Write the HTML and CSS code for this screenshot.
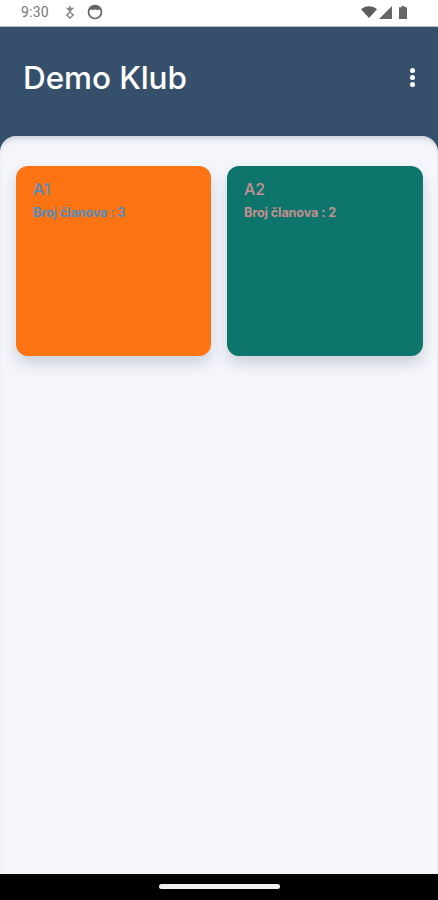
FILE: index.html
```html
<!DOCTYPE html>
<html lang="hr">
<head>
<meta charset="utf-8">
<title>Demo Klub</title>
<link rel="stylesheet" href="styles.css">
</head>
<body>
<div class="screen">
  <div class="status">
    <div class="status-left">
      <span class="time">9:30</span>
      <svg class="ic-a" viewBox="0 0 12 14"><path d="M6 1v4M3.500 3.500h5L6 6zM6 7l3.200 3L6 13 2.800 10z" fill="none" stroke="#888" stroke-width="1.500"/></svg>
      <svg class="ic-b" viewBox="0 0 16 16"><circle cx="8" cy="8" r="6.500" fill="#fff" stroke="#666" stroke-width="1.700"/><path d="M2 7C2 3 5 1.500 8 1.500S14 3 14 7C12 5 11 5 10.500 6.500 9 5 7 5 5.500 6.500 5 5 4 5 2 7z" fill="#666"/></svg>
    </div>
    <div class="status-right">
      <svg class="ic-wifi" viewBox="0 0 16 12"><path d="M0 3.200C4.500-.9 11.500-.9 16 3.200L8 12z" fill="#5c5c5c"/></svg>
      <svg class="ic-signal" viewBox="0 0 13 13"><path d="M13 0v13H0z" fill="#666"/></svg>
      <svg class="ic-batt" viewBox="0 0 8 13"><path d="M2.500 0h3v1.200H8V13H0V1.200h2.500z" fill="#666"/></svg>
    </div>
  </div>
  <header class="appbar">
    <h1 class="title">Demo Klub</h1>
    <div class="menu"><i></i><i></i><i></i></div>
  </header>
  <main class="content">
    <div class="grid">
      <section class="card orange">
        <h2>A1</h2>
        <p>Broj članova : 3</p>
      </section>
      <section class="card teal">
        <h2>A2</h2>
        <p>Broj članova : 2</p>
      </section>
    </div>
  </main>
  <div class="navbar"><span class="pill"></span></div>
</div>
</body>
</html>
```
FILE: styles.css
```css
* { box-sizing: border-box; }
html, body { margin: 0; padding: 0; }
body { font-family: Inter, "Noto Sans", "Liberation Sans", sans-serif; background: #36506c; }
.screen { width: 438px; height: 900px; display: flex; flex-direction: column; overflow: hidden; }
.status { height: 27px; flex: none; background: #fff; display: flex; justify-content: space-between; align-items: center; padding: 1px 31px 3px 21px; border-bottom: 1px solid #b9bcc0; }
.status-left, .status-right { display: flex; align-items: center; }
.time { font-family: Roboto, sans-serif; font-size: 14px; color: #777; width: 43px; letter-spacing: .2px; }
.ic-a { width: 12px; height: 14px; margin-right: 11px; }
.ic-b { width: 16px; height: 16px; }
.ic-wifi { width: 16px; height: 12px; margin-right: 2px; }
.ic-signal { width: 13px; height: 13px; margin-right: 7px; }
.ic-batt { width: 8px; height: 13px; }
.appbar { height: 109px; flex: none; background: #36506c; display: flex; justify-content: space-between; align-items: flex-start; padding: 32px 23px 0 23px; }
.title { margin: 0; font-size: 31.500px; line-height: 38px; font-weight: 500; color: #fff; letter-spacing: -.1px; }
.menu { display: flex; flex-direction: column; gap: 2px; margin-top: 9px; }
.menu i { display: block; width: 5px; height: 5px; border-radius: 50%; background: #fff; }
.content { flex: 1; background: #f4f6fb; border-radius: 16px 16px 0 0; padding: 30px 15px 0 16px; box-shadow: inset 0 6px 6px -4px rgba(30,40,60,.22); }
.grid { display: grid; grid-template-columns: 195px 196px; gap: 16px; }
.card { height: 190px; border-radius: 12px; padding: 13px 17px; box-shadow: 0 8px 14px rgba(60,70,90,.2); }
.card h2 { margin: 0; font-size: 16px; line-height: 20px; font-weight: 500; }
.card p { margin: 6px 0 0; font-size: 12.600px; line-height: 16px; font-weight: 700; letter-spacing: -.1px; }
.orange { background: #fc7314; color: #4f8ec0; }
.teal { background: #0e756d; color: #c58f8f; }
.navbar { height: 26px; flex: none; background: #000; display: flex; justify-content: center; padding-top: 10px; }
.pill { width: 121px; height: 5px; border-radius: 3px; background: #f0f0f0; }
```
